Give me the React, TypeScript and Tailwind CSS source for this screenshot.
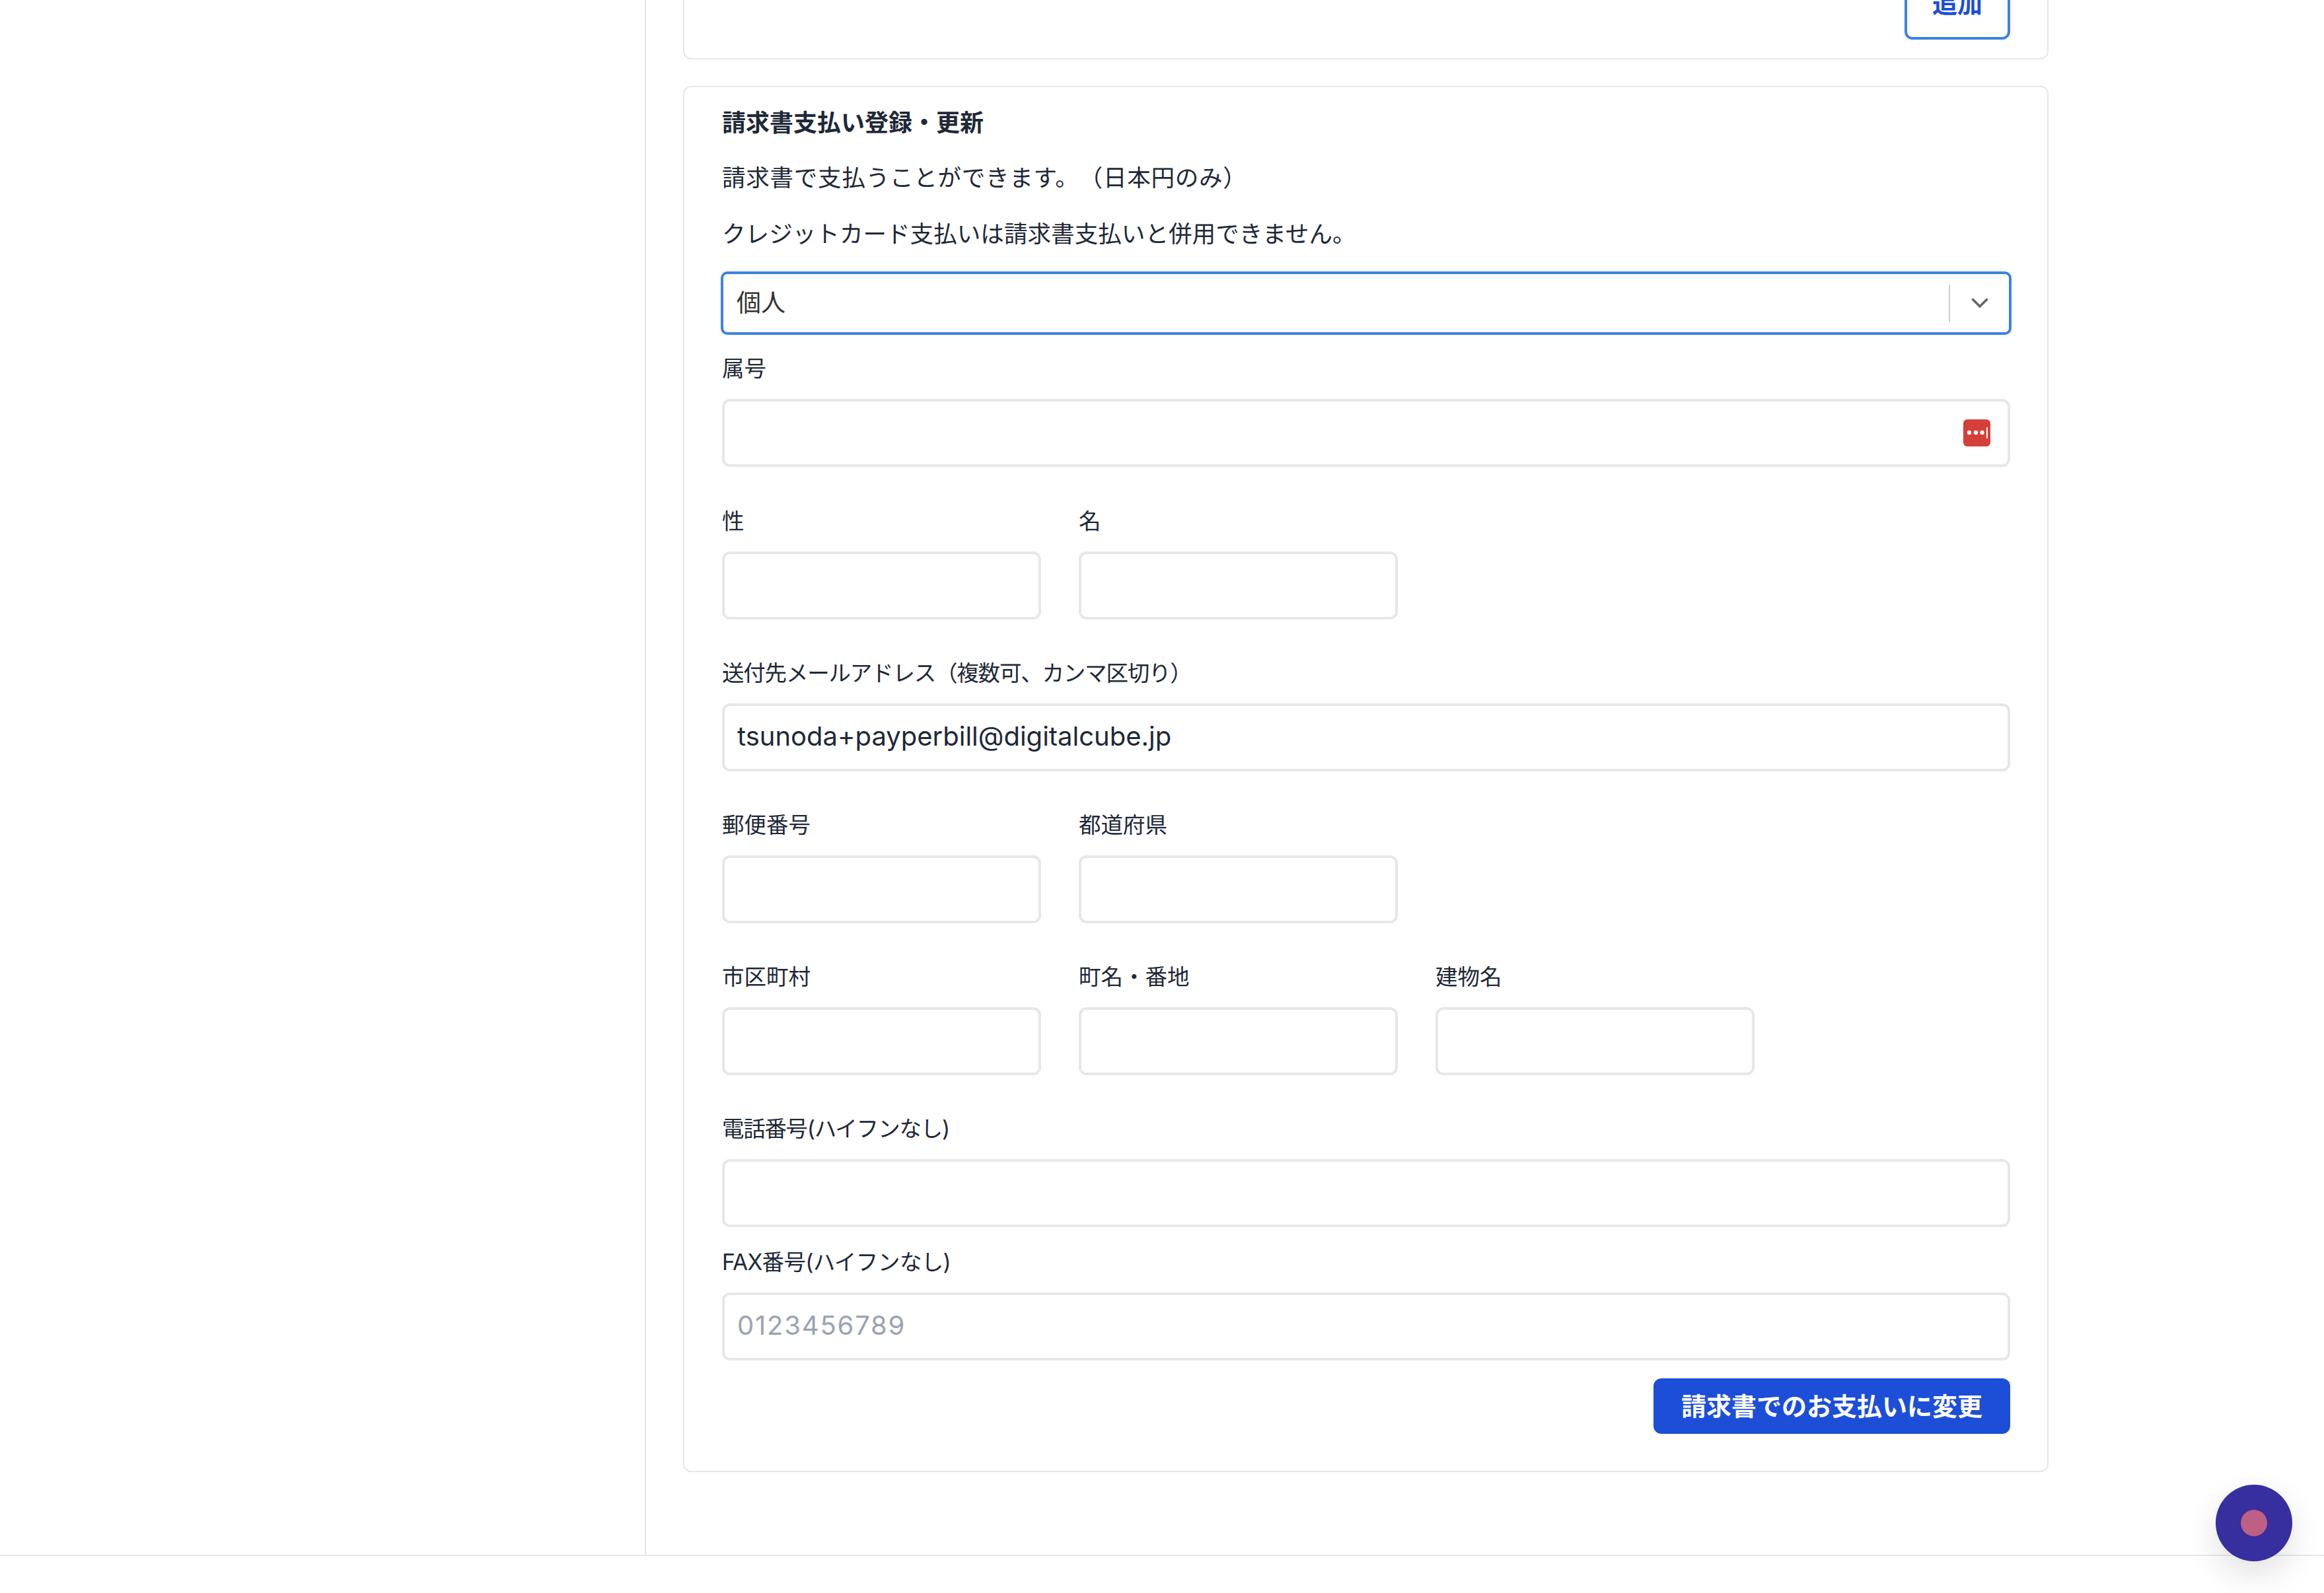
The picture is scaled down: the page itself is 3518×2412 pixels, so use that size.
import React from "react";

function Field({ label, value, placeholder, className = "", labelClass = "", icon }: { label: string; value?: string; placeholder?: string; className?: string; labelClass?: string; icon?: boolean }) {
  return (
    <div className={className}>
      <label className={`block h-[48px] text-[33.5px] leading-[45px] text-[#1f2937] ${labelClass}`}>{label}</label>
      <div className="relative mt-[20px]">
        <input
          readOnly
          defaultValue={value}
          placeholder={placeholder}
          className="block h-[103px] w-full rounded-[12px] border-[4px] border-[#e5e7eb] bg-white px-[19px] pb-[4px] text-[40px] text-[#1f2937] outline-none placeholder:tracking-[1.8px] placeholder:text-[#9ca3af]"
        />
        {icon && (
          <svg viewBox="0 0 41 41" className="absolute right-[30px] top-[31px] h-[41px] w-[41px]">
            <rect width="41" height="41" rx="6" fill="#d53f3a" />
            <circle cx="9" cy="20" r="3.2" fill="#fff" />
            <circle cx="19" cy="20" r="3.2" fill="#fff" />
            <circle cx="28.5" cy="20" r="3.2" fill="#fff" />
            <rect x="35" y="12" width="2" height="17" fill="#fff" />
          </svg>
        )}
      </div>
    </div>
  );
}

export default function App() {
  return (
    <div className="relative h-[2412px] overflow-hidden bg-white font-['Inter','Noto_Sans_CJK_JP',sans-serif] [text-spacing-trim:space-all] text-[#1f2937]">
      <div className="flex h-[2354px]">
        <aside className="w-[978px] shrink-0 border-r-2 border-[#e5e7eb]" />
        <main className="ml-[56px] w-[2067px]">
          <section className="-mt-[40px] flex h-[130px] items-end justify-end rounded-[12px] border-2 border-[#e5e7eb] bg-white pb-[28px] pr-[56px]">
            <button className="h-[110px] w-[160px] shrink-0 rounded-[12px] border-[4px] border-[#3c82e6] bg-white text-[38px] font-bold text-[#1d4ed8]">追加</button>
          </section>
          <section className="mt-[40px] h-[2099px] rounded-[12px] border-2 border-[#e5e7eb] bg-white pl-[57px] pr-[56px] pt-[30px]">
            <h2 className="text-[36px] font-bold leading-[48px] text-[#1f2937]">請求書支払い登録・更新</h2>
            <p className="mt-[33px] text-[35.6px] leading-[54px] tracking-[0.7px]">請求書で支払うことができます。（日本円のみ）</p>
            <p className="mt-[31px] text-[35.6px] leading-[54px]">クレジットカード支払いは請求書支払いと併用できません。</p>
            <div className="-mx-[2px] mt-[29px] flex h-[96px] items-center rounded-[10px] border-[4px] border-[#3c82e6] bg-white pl-[20px]">
              <span className="flex-1 text-[37px] text-[#333333]">個人</span>
              <span className="h-[57px] w-[2px] bg-[#cccccc]" />
              <svg viewBox="0 0 28 18" className="ml-[31px] mr-[30px] h-[18px] w-[28px]" fill="none" stroke="#666666" strokeWidth="3.6">
                <path d="M2.5 2.5 L14 14 L25.5 2.5" />
              </svg>
            </div>
            <div className="mt-[29px] flex flex-col">
              <Field label="属号" icon />
              <div className="mt-[60px] flex gap-[57px]">
                <Field label="性" className="w-[483px]" />
                <Field label="名" className="w-[483px]" />
              </div>
              <Field label="送付先メールアドレス（複数可、カンマ区切り）" labelClass="tracking-[-1.2px]" value="tsunoda+payperbill@digitalcube.jp" className="mt-[59px]" />
              <div className="mt-[59px] flex gap-[57px]">
                <Field label="郵便番号" className="w-[483px]" />
                <Field label="都道府県" className="w-[483px]" />
              </div>
              <div className="mt-[59px] flex gap-[57px]">
                <Field label="市区町村" className="w-[483px]" />
                <Field label="町名・番地" className="w-[483px]" />
                <Field label="建物名" className="w-[483px]" />
              </div>
              <Field label="電話番号(ハイフンなし)" labelClass="tracking-[-1.3px]" className="mt-[59px]" />
              <Field label="FAX番号(ハイフンなし)" labelClass="tracking-[-0.7px]" placeholder="0123456789" className="mt-[31px]" />
            </div>
            <div className="mt-[27px] flex justify-end">
              <button className="h-[84px] w-[540px] rounded-[12px] bg-[#1d4ed8] text-[38px] font-bold text-white">請求書でのお支払いに変更</button>
            </div>
          </section>
        </main>
      </div>
      <footer className="h-[58px] border-t-2 border-[#e5e7eb]" />
      <div className="absolute left-[3354px] top-[2248px] flex h-[116px] w-[116px] items-center justify-center rounded-full bg-[#372ea0] shadow-[0_20px_50px_rgba(0,0,0,0.12)]">
        <div className="h-[40px] w-[40px] rounded-full bg-[#be5f84]" />
      </div>
    </div>
  );
}
